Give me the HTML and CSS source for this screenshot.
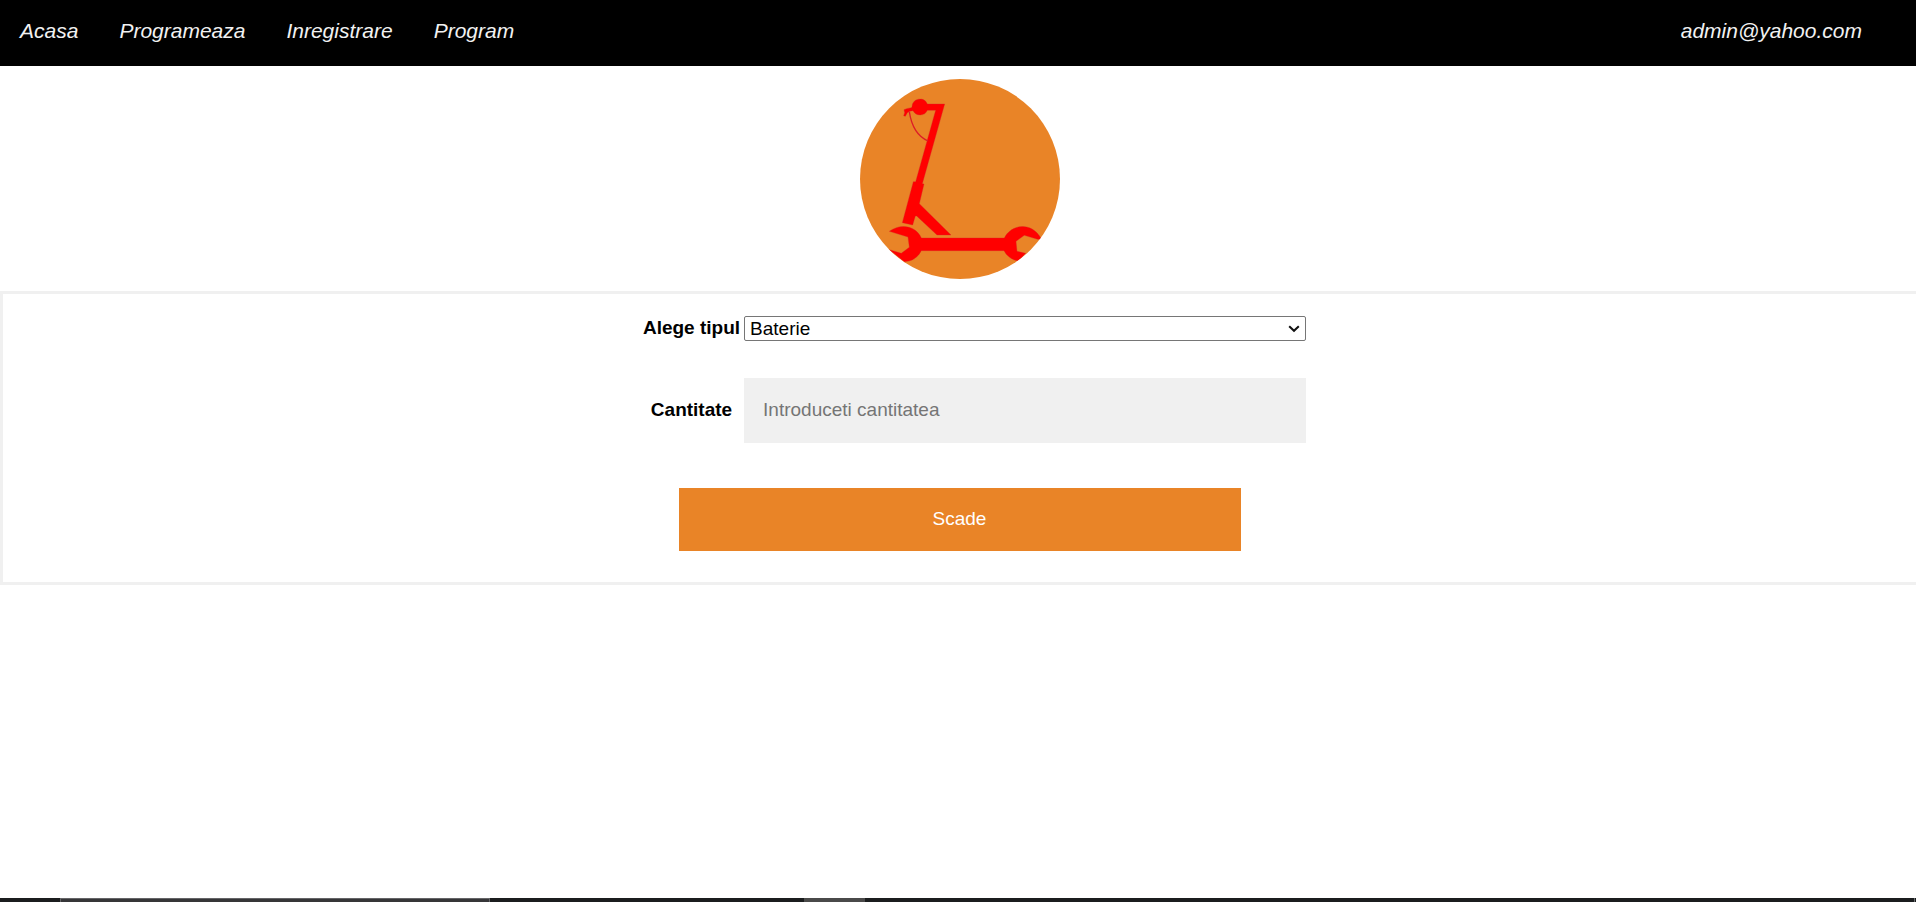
FILE: index.html
```html
<!DOCTYPE html>
<html lang="ro">
<head>
<meta charset="utf-8">
<title>Scade piese</title>
<link rel="stylesheet" href="styles.css">
</head>
<body>
<nav class="nav">
  <a href="#">Acasa</a>
  <a href="#">Programeaza</a>
  <a href="#">Inregistrare</a>
  <a href="#">Program</a>
  <a class="nav-user" href="#">admin@yahoo.com</a>
</nav>
<main class="main">
  <div class="logo-wrap">
    <svg class="logo" viewBox="0 0 600 600" role="img" aria-label="Trotineta">
      <defs><clipPath id="disc"><circle cx="300" cy="300" r="300"/></clipPath></defs>
      <circle cx="300" cy="300" r="300" fill="#e98427"/>
      <g clip-path="url(#disc)" fill="#f00" stroke="#d5212b" stroke-width="1">
        <path d="M156 83A24 24 0 0 1 202 75H254L187 314L192 315L178 374L273 468H231L170 411H166L158 438L127 431L160 308H167L227 94H202A24 24 0 0 1 159 95L149 97L142 101L136 112L131 110L134 101L132 92L140 89L154 86Z"/>
        <path d="M148 98C154 139 172 172 204 186" fill="none" stroke="#dc1d27" stroke-width="4"/>
        <path d="M88 457C125 431 168 442 184 477H433C452 438 512 424 544 479L543 481L533 481L493 469L468 487L471 517L497 523L474 546Q445 540 432 515H184Q168 547 133 548L88 512L124 523L148 505L144 474Z"/>
      </g>
    </svg>
  </div>
  <form class="panel">
    <div class="fields">
      <label for="tip">Alege tipul</label>
      <div class="select-wrap">
        <select id="tip" class="select"><option>Baterie</option></select>
        <svg class="chevron" viewBox="0 0 12 8" aria-hidden="true"><path d="M1.2 1.2L6 5.8L10.8 1.2"/></svg>
      </div>
      <label for="cantitate">Cantitate</label>
      <input id="cantitate" class="input" type="text" placeholder="Introduceti cantitatea">
    </div>
    <button class="submit" type="button">Scade</button>
  </form>
</main>
<footer class="taskbar"><span class="task-search"></span><span class="task-active"></span></footer>
</body>
</html>
```
FILE: styles.css
```css
* { box-sizing: border-box; }

body {
  margin: 0;
  min-height: 100vh;
  display: flex;
  flex-direction: column;
  background: #fff;
  color: #000;
  font-family: "Liberation Sans", Arial, sans-serif;
  font-size: 19px;
}

.nav {
  display: flex;
  gap: 41px;
  padding: 19px 54px 23px 20px;
  background: #000;
  font-size: 21px;
  font-style: italic;
  line-height: 24px;
}

.nav a { color: #f2f2f2; text-decoration: none; }
.nav .nav-user { margin-left: auto; }

.main { flex: 1; }

.logo-wrap {
  display: flex;
  justify-content: center;
  padding: 13px 0 12px 4px;
}

.logo { display: block; width: 200px; height: 200px; }

.panel {
  border: 3px solid #f0f0f0;
  border-right: 0;
  padding: 22px 0 31px;
}

.fields {
  display: grid;
  grid-template-columns: auto minmax(0, 562px);
  justify-content: center;
  align-items: center;
  gap: 37px 4px;
  padding-left: 30px;
}

.fields label {
  font-weight: bold;
  line-height: 20px;
  padding-bottom: 2px;
  text-align: center;
}

.select,
.input,
.submit {
  font-family: inherit;
  font-size: 19px;
}

.select-wrap { position: relative; }

.select {
  display: block;
  appearance: none;
  width: 100%;
  height: 25px;
  border: 1px solid #767676;
  border-radius: 2px;
  background: #fff;
  color: #000;
  padding: 0 20px 0 5px;
}

.chevron {
  position: absolute;
  right: 6px;
  top: 9px;
  width: 12px;
  height: 8px;
  fill: none;
  stroke: #101010;
  stroke-width: 2;
  pointer-events: none;
}

.input {
  width: 100%;
  height: 65px;
  border: 0;
  padding: 19px 19px 21px;
  line-height: 25px;
  background: #f0f0f0;
}

.input::placeholder { color: #757575; }

.submit {
  display: block;
  width: 100%;
  max-width: 562px;
  margin: 45px auto 0;
  padding: 18px 20px 20px;
  line-height: 25px;
  border: 0;
  background: #e98427;
  color: #fff;
}

.taskbar {
  display: flex;
  height: 4px;
  padding: 0 1px 0 60px;
  background: #1b1d1e;
}

.taskbar::after {
  content: "";
  width: 1px;
  margin-left: auto;
  background: #6b6d6e;
}

.task-search {
  width: 430px;
  background: #363638;
  border: solid #656567;
  border-width: 1px 1px 0;
}

.task-active {
  width: 61px;
  margin-left: 314px;
  background: #4a4a4a;
}
```
